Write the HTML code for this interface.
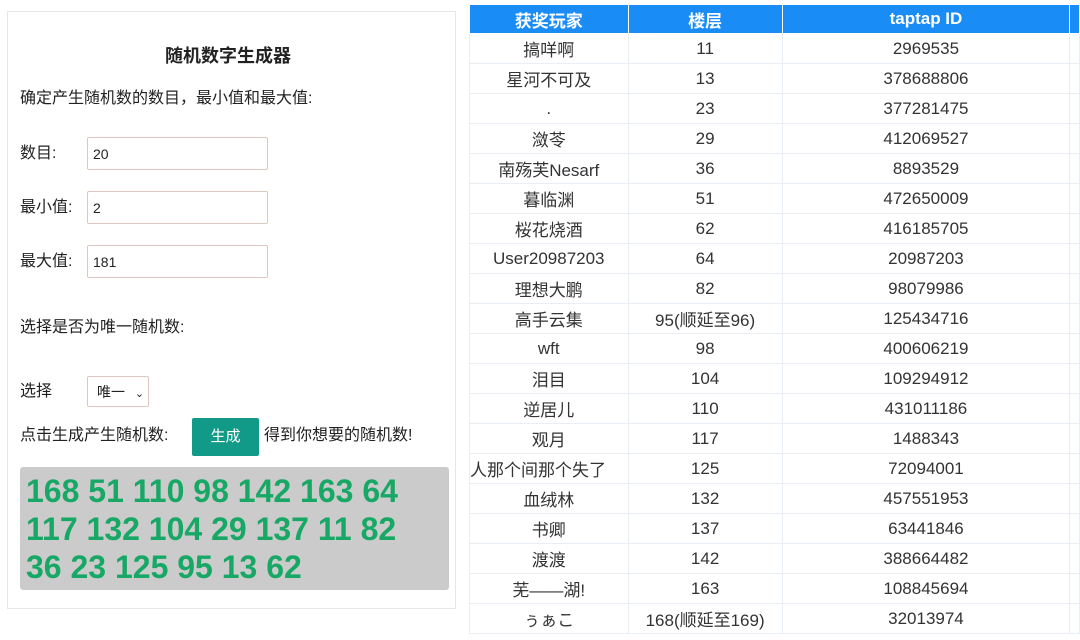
<!DOCTYPE html>
<html><head><meta charset="utf-8"><style>
*{margin:0;padding:0;box-sizing:border-box}
body{width:1080px;height:640px;background:#fff;position:relative;overflow:hidden;font-family:"Liberation Sans","Noto Sans CJK SC",sans-serif;color:#222}
.p{position:absolute;left:7px;top:11px;width:449px;height:598px;border:1px solid #e6e6e6}
.a{position:absolute;font-size:16px;white-space:nowrap;line-height:20px}
.in{position:absolute;left:87px;width:181px;height:33px;border:1px solid #dcc8c0;border-radius:2px;font-size:14px;padding:9px 0 0 5px;line-height:14px}
table{position:absolute;left:469px;top:4px;border-collapse:collapse;font-size:17px;color:#333}
td,th{height:30px;text-align:center;border:1px solid #e8eef4;padding:0;white-space:nowrap;overflow:hidden}
th{background:#1a8cf5;color:#fff;font-weight:bold;font-size:17px;height:29px;border-color:#fff}
</style></head><body>
<div class="p"></div>
<div class="a" style="left:0;width:456px;text-align:center;top:46px;font-size:18px;font-weight:bold">随机数字生成器</div>
<div class="a" style="left:20px;top:89px">确定产生随机数的数目，最小值和最大值:</div>
<div class="a" style="left:20px;top:144px">数目:</div><div class="in" style="top:137px">20</div>
<div class="a" style="left:20px;top:198px">最小值:</div><div class="in" style="top:191px">2</div>
<div class="a" style="left:20px;top:252px">最大值:</div><div class="in" style="top:245px">181</div>
<div class="a" style="left:20px;top:318px">选择是否为唯一随机数:</div>
<div class="a" style="left:20px;top:382px">选择</div>
<div class="in" style="top:376px;width:62px;height:31px;padding:8px 0 0 9px">唯一 <span style="font-size:11px;margin-left:6px">&#8964;</span></div>
<div class="a" style="left:20px;top:426px">点击生成产生随机数:</div>
<div class="a" style="left:192px;top:418px;width:67px;height:38px;background:#119a88;color:#fff;border-radius:2px;font-size:15px;text-align:center;line-height:38px">生成</div>
<div class="a" style="left:264px;top:426px">得到你想要的随机数!</div>
<div style="position:absolute;left:20px;top:467px;width:429px;height:123px;background:#cbcbcb;border-radius:3px;color:#18a866;font-weight:bold;font-size:32px;line-height:38px;padding:5px 0 0 6px;white-space:nowrap;font-family:'Liberation Sans',sans-serif">168 51 110 98 142 163 64<br>117 132 104 29 137 11 82<br>36 23 125 95 13 62</div>
<table>
<tr><th style="width:159px">获奖玩家</th><th style="width:155px">楼层</th><th style="width:292px">taptap ID</th><th style="width:10px"></th></tr>
<tr><td>搞咩啊</td><td>11</td><td>2969535</td><td></td></tr>
<tr><td>星河不可及</td><td>13</td><td>378688806</td><td></td></tr>
<tr><td>.</td><td>23</td><td>377281475</td><td></td></tr>
<tr><td>潋苓</td><td>29</td><td>412069527</td><td></td></tr>
<tr><td>南殇芙Nesarf</td><td>36</td><td>8893529</td><td></td></tr>
<tr><td>暮临渊</td><td>51</td><td>472650009</td><td></td></tr>
<tr><td>桜花烧酒</td><td>62</td><td>416185705</td><td></td></tr>
<tr><td>User20987203</td><td>64</td><td>20987203</td><td></td></tr>
<tr><td>理想大鹏</td><td>82</td><td>98079986</td><td></td></tr>
<tr><td>高手云集</td><td>95(顺延至96)</td><td>125434716</td><td></td></tr>
<tr><td>wft</td><td>98</td><td>400606219</td><td></td></tr>
<tr><td>泪目</td><td>104</td><td>109294912</td><td></td></tr>
<tr><td>逆居儿</td><td>110</td><td>431011186</td><td></td></tr>
<tr><td>观月</td><td>117</td><td>1488343</td><td></td></tr>
<tr><td style="text-align:left;max-width:159px">人那个间那个失了</td><td>125</td><td>72094001</td><td></td></tr>
<tr><td>血绒林</td><td>132</td><td>457551953</td><td></td></tr>
<tr><td>书卿</td><td>137</td><td>63441846</td><td></td></tr>
<tr><td>渡渡</td><td>142</td><td>388664482</td><td></td></tr>
<tr><td>芜——湖!</td><td>163</td><td>108845694</td><td></td></tr>
<tr><td>ぅぁこ</td><td>168(顺延至169)</td><td>32013974</td><td></td></tr>
</table>
</body></html>
